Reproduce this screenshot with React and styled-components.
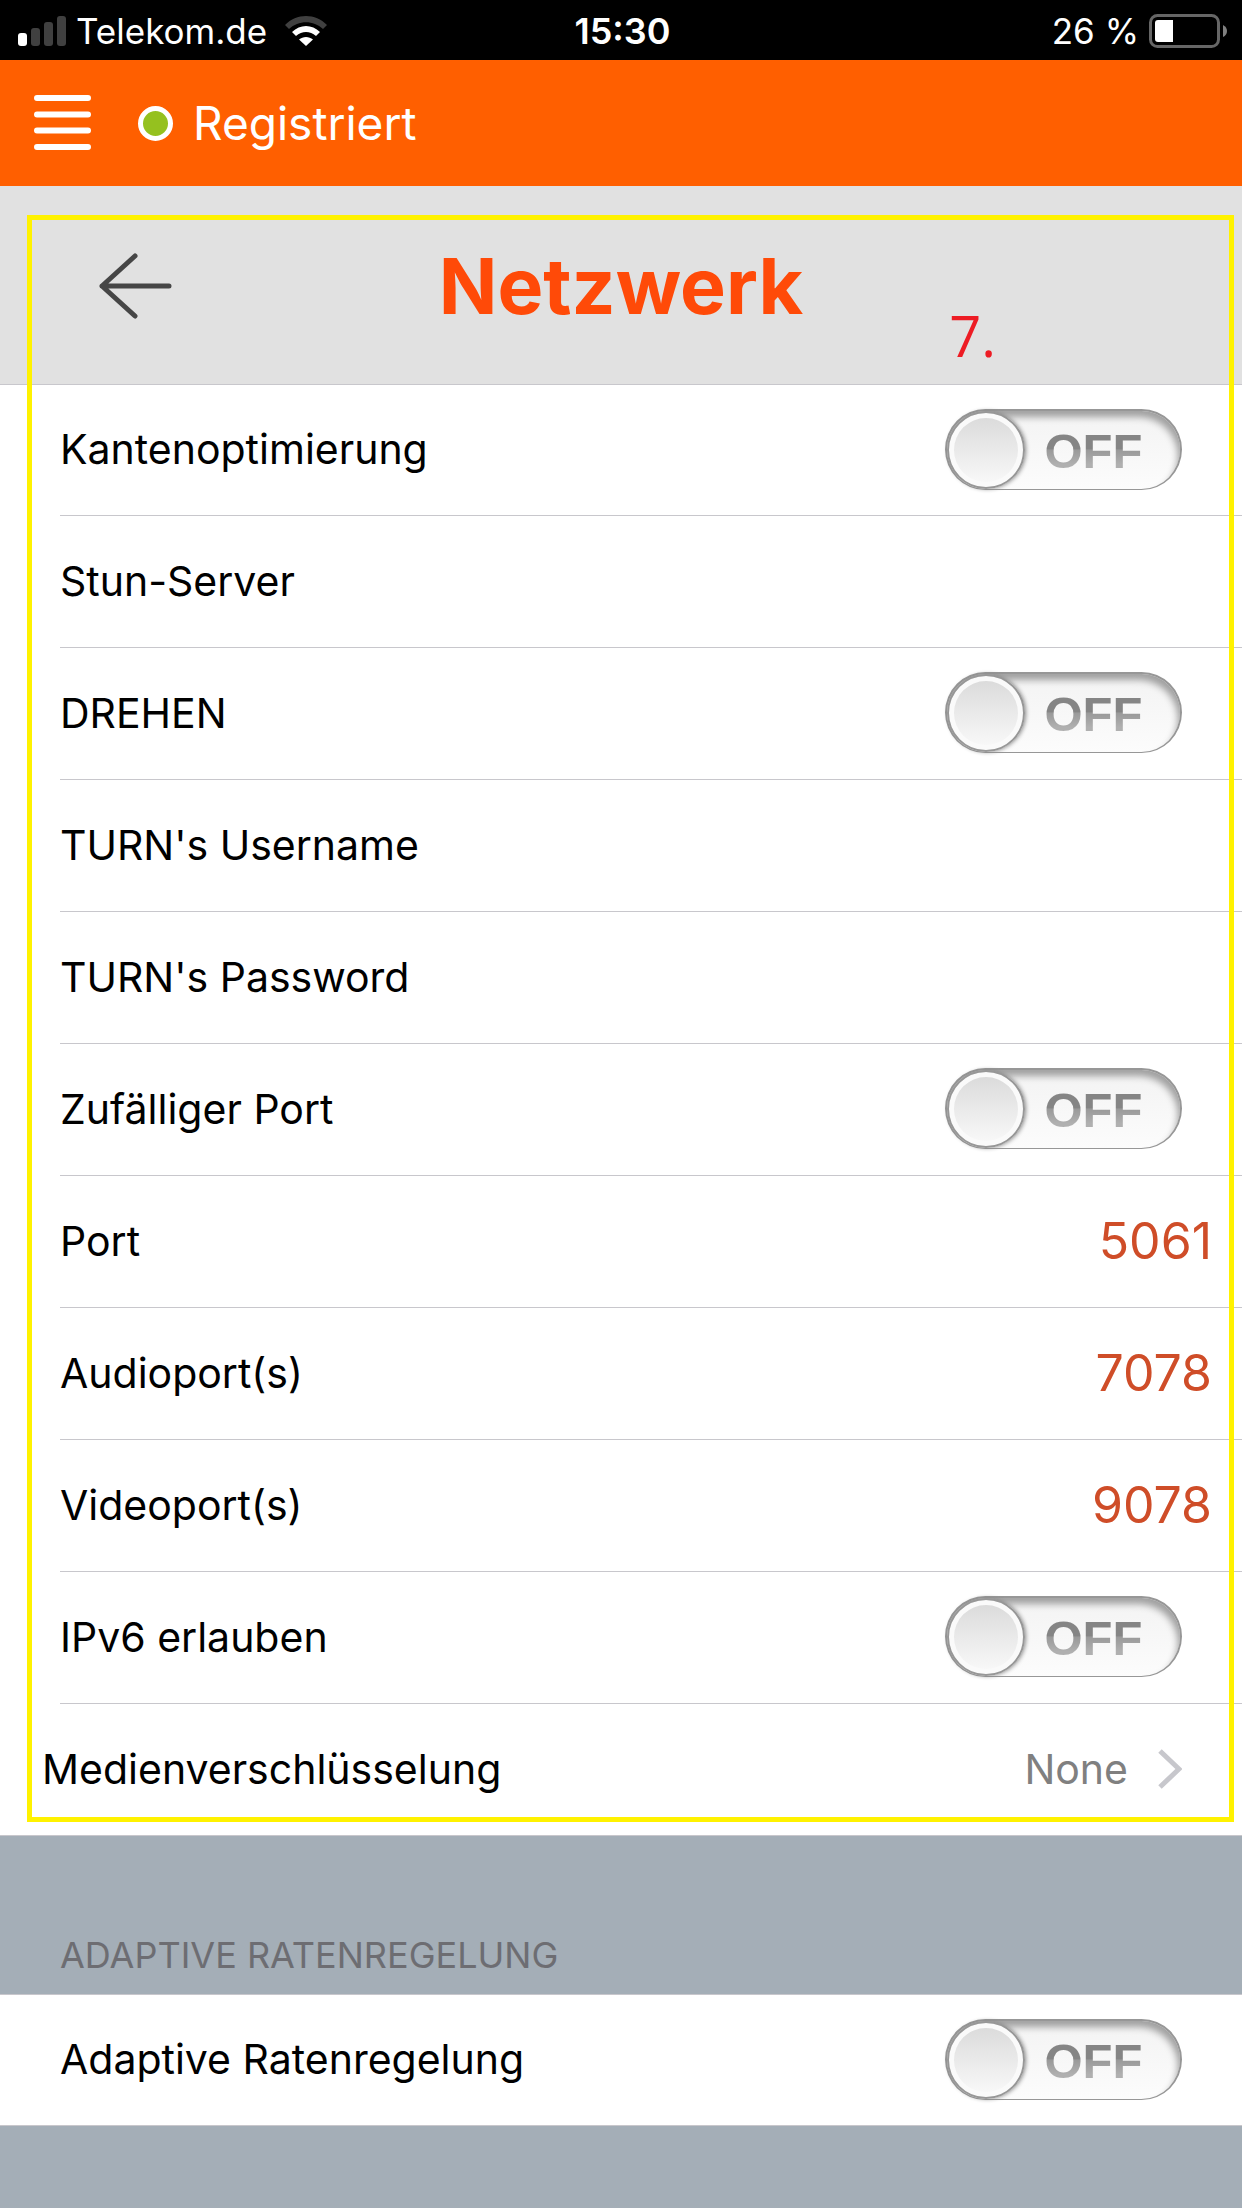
import React, { useState } from 'react';
import styled, { createGlobalStyle } from 'styled-components';

const GlobalStyle = createGlobalStyle`
  * {
    box-sizing: border-box;
  }

  body {
    margin: 0;
    background: #a4aeb7;
    color: #000;
    font-family: Inter, 'Liberation Sans', sans-serif;
    font-size: 41px;
  }

  button,
  input {
    margin: 0;
    padding: 0;
    border: 0;
    background: none;
    color: inherit;
    font: inherit;
  }
`;

const StatusBar = styled.div`
  display: grid;
  grid-template-columns: 1fr auto 1fr;
  align-items: center;
  height: 60px;
  padding: 0 15px 0 18px;
  background: #000;
  color: #fff;
  font-size: 35px;
  line-height: 62px;
`;

const StatusGroup = styled.div`
  display: flex;
  align-items: center;
  justify-content: ${({ $end }) => ($end ? 'flex-end' : 'flex-start')};
  gap: 10px;
`;

const Carrier = styled.span`
  margin-right: 8px;
`;

const Clock = styled.time`
  font-size: 36px;
  font-weight: 600;
`;

const AppBar = styled.header`
  display: flex;
  align-items: center;
  height: 126px;
  padding: 0 34px;
  background: #ff5f00;
  color: #fff;
`;

const IconButton = styled.button`
  display: flex;
  cursor: pointer;
`;

const StatusDot = styled.span`
  width: 35px;
  height: 35px;
  margin: 0 20px 0 47px;
  border: 5px solid #fff;
  border-radius: 50%;
  background: #95c11f;
`;

const Registration = styled.span`
  font-size: 46px;
`;

const Panel = styled.main`
  position: relative;
`;

const TitleBar = styled.div`
  display: grid;
  grid-template-columns: 1fr auto 1fr;
  align-items: center;
  height: 199px;
  padding: 0 98px;
  border-bottom: 1px solid #c8c7cc;
  background: #e1e1e1;
`;

const Title = styled.h1`
  margin: 0;
  color: #ff4a08;
  font-size: 77px;
  font-weight: 700;
  line-height: 200px;
`;

const List = styled.ul`
  margin: 0;
  padding: 0;
  list-style: none;
  border-bottom: 1px solid #c8c7cc;
  background: #fff;
`;

const Item = styled.li`
  padding-left: ${({ $flush }) => ($flush ? '42px' : '60px')};
`;

const Row = styled.div`
  display: flex;
  align-items: center;
  justify-content: space-between;
  height: ${({ $first }) => ($first ? '130px' : '132px')};
  padding-right: ${({ $wide }) => ($wide ? '30px' : '60px')};
  padding-bottom: 2px;
  border-top: ${({ $first }) => ($first ? '0' : '1px solid #c8c7cc')};
`;

const FlushDivider = styled.div`
  height: 1px;
  margin-left: 18px;
  background: #c8c7cc;
`;

const Field = styled.input`
  flex: 1;
  min-width: 0;
  color: #cf4d28;
  font-size: 50px;
  text-align: right;
  outline: none;
`;

const Disclosure = styled.button`
  display: flex;
  align-items: center;
  width: 100%;
  height: 131px;
  padding: 0 60px 2px 0;
  text-align: left;
  cursor: pointer;
`;

const DisclosureValue = styled.span`
  margin: 0 30px 0 auto;
  color: #808080;
`;

const SwitchTrack = styled.span`
  position: relative;
  display: flex;
  flex-direction: ${({ $on }) => ($on ? 'row-reverse' : 'row')};
  align-items: center;
  width: 237px;
  height: 81px;
  border: 2px solid #979797;
  border-bottom-width: 1px;
  border-radius: 41px;
  background: linear-gradient(#f3f3f3, #fcfcfc);
  box-shadow: inset -3px 7px 7px -1px #a0a0a0;
`;

const SwitchInput = styled.input`
  position: absolute;
  inset: 0;
  width: 100%;
  height: 100%;
  opacity: 0;
  cursor: pointer;
`;

const Knob = styled.span`
  width: 78px;
  height: 78px;
  border: 2px solid #979797;
  border-radius: 50%;
  background: linear-gradient(#d9d9d9, #fafafa);
  box-shadow: inset 0 0 0 5px #fafafa, 1px 0 4px #888;
`;

const SwitchText = styled.span`
  flex: 1;
  padding: 2px 18px 0 0;
  background: linear-gradient(#858585 48%, #999 50%, #b0b0b0 75%);
  background-clip: text;
  color: transparent;
  font-family: 'Liberation Sans', Arial, sans-serif;
  font-size: 49px;
  font-weight: 700;
  line-height: 56px;
  text-align: center;
`;

const SectionHeading = styled.h2`
  display: flex;
  align-items: flex-end;
  height: 159px;
  margin: 0;
  padding: 0 60px 17px;
  border-bottom: 1px solid #c8c7cc;
  color: #6d6d72;
  font-size: 36px;
  font-weight: 400;
  line-height: 44px;
  text-transform: uppercase;
`;

const Frame = styled.div`
  position: absolute;
  inset: 29px 8px 14px 27px;
  border: 5px solid #fff200;
  pointer-events: none;
`;

const StepMark = styled.span`
  position: absolute;
  top: 111px;
  right: 246px;
  color: #ed1c24;
  font-family: 'Open Sans', sans-serif;
  font-size: 56px;
  line-height: 76px;
`;

const SignalIcon = () => (
  <svg width='48' height='30' viewBox='0 0 48 30' aria-hidden='true'>
    <rect x='0' y='17' width='9' height='13' rx='3' fill='#fff' />
    <rect x='13' y='12' width='9' height='18' rx='3' fill='#404040' />
    <rect x='26' y='6' width='9' height='24' rx='3' fill='#404040' />
    <rect x='39' y='0' width='9' height='30' rx='3' fill='#404040' />
  </svg>
);

const WifiIcon = () => (
  <svg width='42' height='30' viewBox='0 0 42 30' aria-hidden='true'>
    <path
      d='M0 9 C11.5 -3 30.5 -3 42 9 L38 13 C28.5 4 13.5 4 4 13 Z'
      fill='#404040'
    />
    <path
      d='M7 16 C15 8 27 8 35 16 L31 20 C25 14.5 17 14.5 11 20 Z'
      fill='#fff'
    />
    <path d='M14 23.5 C18 20 24 20 28 23.5 L21 30 Z' fill='#fff' />
  </svg>
);

const BatteryIcon = () => (
  <svg width='78' height='34' viewBox='0 0 78 34' aria-hidden='true'>
    <rect
      x='1.5'
      y='1.5'
      width='68'
      height='31'
      rx='7'
      fill='none'
      stroke='#666'
      strokeWidth='3'
    />
    <path d='M9 6 H24 V28 H9 Q6 28 6 25 V9 Q6 6 9 6 Z' fill='#fff' />
    <path d='M74 11 Q78 13 78 17 Q78 21 74 23 Z' fill='#808080' />
  </svg>
);

const MenuIcon = () => (
  <svg width='57' height='57' viewBox='0 0 57 57' aria-hidden='true'>
    <path
      d='M3 3 H54 M3 19.5 H54 M3 35.5 H54 M3 52 H54'
      stroke='#fff'
      strokeWidth='6'
      strokeLinecap='round'
    />
  </svg>
);

const BackIcon = () => (
  <svg width='76' height='66' viewBox='0 0 76 66' aria-hidden='true'>
    <path
      d='M37 3 L4 33 L37 63 M4 33 H71'
      fill='none'
      stroke='#464646'
      strokeWidth='5'
      strokeLinecap='round'
      strokeLinejoin='round'
    />
  </svg>
);

const ChevronIcon = () => (
  <svg width='24' height='40' viewBox='0 0 24 40' aria-hidden='true'>
    <path
      d='M2 2 L21 20 L2 38'
      fill='none'
      stroke='#c7c7cc'
      strokeWidth='5'
    />
  </svg>
);

const Switch = ({ id }) => {
  const [on, setOn] = useState(false);

  return (
    <SwitchTrack $on={on}>
      <Knob />
      <SwitchText aria-hidden='true'>{on ? 'ON' : 'OFF'}</SwitchText>
      <SwitchInput
        id={id}
        type='checkbox'
        role='switch'
        checked={on}
        onChange={(event) => setOn(event.target.checked)}
      />
    </SwitchTrack>
  );
};

const settings = [
  { id: 'ice', label: 'Kantenoptimierung', type: 'switch' },
  { id: 'stun', label: 'Stun-Server', type: 'text' },
  { id: 'turn', label: 'DREHEN', type: 'switch' },
  { id: 'turn-user', label: "TURN's Username", type: 'text' },
  { id: 'turn-password', label: "TURN's Password", type: 'password' },
  { id: 'random-port', label: 'Zufälliger Port', type: 'switch' },
  { id: 'port', label: 'Port', type: 'text', value: '5061' },
  { id: 'audio-port', label: 'Audioport(s)', type: 'text', value: '7078' },
  { id: 'video-port', label: 'Videoport(s)', type: 'text', value: '9078' },
  { id: 'ipv6', label: 'IPv6 erlauben', type: 'switch' },
];

const Setting = ({ id, label, type, value, first }) => (
  <Item>
    <Row $first={first} $wide={type !== 'switch'}>
      <label htmlFor={id}>{label}</label>
      {type === 'switch' ? (
        <Switch id={id} />
      ) : (
        <Field id={id} type={type} defaultValue={value} />
      )}
    </Row>
  </Item>
);

const App = () => (
  <>
    <GlobalStyle />
    <StatusBar>
      <StatusGroup>
        <SignalIcon />
        <Carrier>Telekom.de</Carrier>
        <WifiIcon />
      </StatusGroup>
      <Clock>15:30</Clock>
      <StatusGroup $end>
        <span>26 %</span>
        <BatteryIcon />
      </StatusGroup>
    </StatusBar>
    <AppBar>
      <IconButton type='button' aria-label='Menü'>
        <MenuIcon />
      </IconButton>
      <StatusDot />
      <Registration>Registriert</Registration>
    </AppBar>
    <Panel>
      <TitleBar>
        <IconButton type='button' aria-label='Zurück'>
          <BackIcon />
        </IconButton>
        <Title>Netzwerk</Title>
      </TitleBar>
      <List>
        {settings.map((setting, index) => (
          <Setting key={setting.id} {...setting} first={index === 0} />
        ))}
        <Item $flush>
          <FlushDivider />
          <Disclosure type='button'>
            Medienverschlüsselung
            <DisclosureValue>None</DisclosureValue>
            <ChevronIcon />
          </Disclosure>
        </Item>
      </List>
      <Frame />
      <StepMark>7.</StepMark>
    </Panel>
    <section>
      <SectionHeading>Adaptive Ratenregelung</SectionHeading>
      <List>
        <Setting id='adaptive' label='Adaptive Ratenregelung' type='switch' first />
      </List>
    </section>
  </>
);

export default App;
